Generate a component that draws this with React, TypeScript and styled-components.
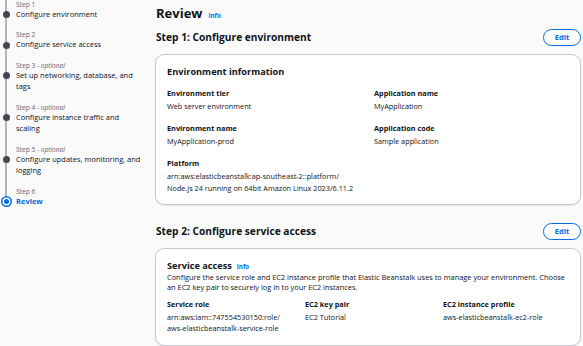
import React from "react";
import styled, { createGlobalStyle } from "styled-components";

const GlobalStyle = createGlobalStyle`
  html, body {
    margin: 0;
    padding: 0;
    background: #fafafa;
    font-family: "Open Sans", "Noto Sans", Arial, sans-serif;
    color: #0f141a;
    overflow: hidden;
  }
`;

const Layout = styled.div`
  display: grid;
  grid-template-columns: 155px 1fr;
  width: 583px;
  height: 346px;
  overflow: hidden;
`;

const Sidebar = styled.nav`
  position: relative;
  padding-right: 12px;
`;

const StepList = styled.ol`
  list-style: none;
  margin: 0;
  padding: 0;
  position: relative;

  &::before {
    content: "";
    position: absolute;
    left: 5px;
    top: 0;
    bottom: 10px;
    width: 1.5px;
    background: #b4b4bb;
  }
`;

const StepItem = styled.li`
  position: relative;
  padding: 0 0 9.6px 16px;
`;

const StepLabel = styled.div`
  font-size: 6.6px;
  line-height: 9px;
  color: #656871;

  em {
    font-style: italic;
  }
`;

const StepTitle = styled.div<{ $active?: boolean }>`
  position: relative;
  font-size: 7.5px;
  line-height: 11.7px;
  color: ${(p) => (p.$active ? "#006ce0" : "#0f141a")};
  font-weight: ${(p) => (p.$active ? 700 : 400)};

  &::before {
    content: "";
    position: absolute;
    left: ${(p) => (p.$active ? "-12.5px" : "-13.5px")};
    top: ${(p) => (p.$active ? "3.3px" : "2.3px")};
    width: ${(p) => (p.$active ? "5px" : "7px")};
    height: ${(p) => (p.$active ? "5px" : "7px")};
    border-radius: 50%;
    background: ${(p) => (p.$active ? "#006ce0" : "#424650")};
    box-shadow: ${(p) =>
      p.$active ? "0 0 0 1.5px #ffffff, 0 0 0 3px #006ce0" : "none"};
  }
`;

const Main = styled.main`
  padding: 4px 2px 0 0;
  display: flex;
  flex-direction: column;
`;

const PageTitle = styled.h1`
  margin: 0 0 3px 1px;
  font-size: 13px;
  line-height: 19px;
  font-weight: 700;
  display: flex;
  align-items: baseline;
  gap: 6px;
`;

const InfoLink = styled.span`
  font-size: 6.2px;
  font-weight: 700;
  color: #006ce0;
`;

const SectionHeader = styled.div`
  display: flex;
  align-items: center;
  justify-content: space-between;
  height: 18px;
  margin-bottom: 8px;
`;

const SectionTitle = styled.h2`
  margin: 0 0 0 1px;
  font-size: 10.2px;
  line-height: 14px;
  font-weight: 700;
`;

const EditButton = styled.button`
  width: 38px;
  height: 17px;
  padding: 0;
  border: 1.5px solid #006ce0;
  border-radius: 10px;
  background: #ffffff;
  color: #006ce0;
  font-family: inherit;
  font-size: 7.5px;
  font-weight: 700;
  cursor: pointer;
`;

const Card = styled.section`
  background: #ffffff;
  border: 1px solid #c6c6cd;
  border-radius: 9px;
  box-shadow: 0 1px 2px rgba(0, 7, 22, 0.08);
  padding: 10px 11px 10px 11px;
  margin-bottom: 17px;
`;

const CardTitle = styled.h3`
  margin: 0 0 8px;
  font-size: 9.2px;
  line-height: 14px;
  font-weight: 700;
  display: flex;
  align-items: baseline;
  gap: 5px;
`;

const Description = styled.p`
  margin: -10px 0 5px;
  font-size: 7.4px;
  line-height: 10.3px;
  color: #0f141a;
`;

const FieldGrid = styled.div<{ $cols: number }>`
  display: grid;
  grid-template-columns: repeat(${(p) => p.$cols}, 1fr);
  column-gap: 12px;
  row-gap: 9.5px;
`;

const Field = styled.div``;

const FieldLabel = styled.div`
  font-size: 7.3px;
  line-height: 12px;
  font-weight: 700;
`;

const FieldValue = styled.div`
  margin-top: 2px;
  font-size: 7.3px;
  line-height: 11.5px;
`;

const steps = [
  { label: "Step 1", optional: false, title: "Configure environment" },
  { label: "Step 2", optional: false, title: "Configure service access" },
  { label: "Step 3", optional: true, title: "Set up networking, database, and tags" },
  { label: "Step 4", optional: true, title: "Configure instance traffic and scaling" },
  { label: "Step 5", optional: true, title: "Configure updates, monitoring, and logging" },
  { label: "Step 6", optional: false, title: "Review", active: true },
];

export default function App() {
  return (
    <>
      <GlobalStyle />
      <Layout>
        <Sidebar>
          <StepList>
            {steps.map((s) => (
              <StepItem key={s.label}>
                <StepLabel>
                  {s.label}
                  {s.optional && (
                    <>
                      {" - "}
                      <em>optional</em>
                    </>
                  )}
                </StepLabel>
                <StepTitle $active={s.active}>{s.title}</StepTitle>
              </StepItem>
            ))}
          </StepList>
        </Sidebar>

        <Main>
          <PageTitle>
            Review <InfoLink>Info</InfoLink>
          </PageTitle>

          <SectionHeader>
            <SectionTitle>Step 1: Configure environment</SectionTitle>
            <EditButton>Edit</EditButton>
          </SectionHeader>
          <Card>
            <CardTitle>Environment information</CardTitle>
            <FieldGrid $cols={2}>
              <Field>
                <FieldLabel>Environment tier</FieldLabel>
                <FieldValue>Web server environment</FieldValue>
              </Field>
              <Field>
                <FieldLabel>Application name</FieldLabel>
                <FieldValue>MyApplication</FieldValue>
              </Field>
              <Field>
                <FieldLabel>Environment name</FieldLabel>
                <FieldValue>MyApplication-prod</FieldValue>
              </Field>
              <Field>
                <FieldLabel>Application code</FieldLabel>
                <FieldValue>Sample application</FieldValue>
              </Field>
              <Field>
                <FieldLabel>Platform</FieldLabel>
                <FieldValue>
                  arn:aws:elasticbeanstalk:ap-southeast-2::platform/
                  <br />
                  Node.js 24 running on 64bit Amazon Linux 2023/6.11.2
                </FieldValue>
              </Field>
            </FieldGrid>
          </Card>

          <SectionHeader>
            <SectionTitle>Step 2: Configure service access</SectionTitle>
            <EditButton>Edit</EditButton>
          </SectionHeader>
          <Card>
            <CardTitle>
              Service access <InfoLink>Info</InfoLink>
            </CardTitle>
            <Description>
              Configure the service role and EC2 instance profile that Elastic
              Beanstalk uses to manage your environment. Choose an EC2 key pair
              to securely log in to your EC2 instances.
            </Description>
            <FieldGrid $cols={3}>
              <Field>
                <FieldLabel>Service role</FieldLabel>
                <FieldValue>
                  arn:aws:iam::747554530150:role/
                  <br />
                  aws-elasticbeanstalk-service-role
                </FieldValue>
              </Field>
              <Field>
                <FieldLabel>EC2 key pair</FieldLabel>
                <FieldValue>EC2 Tutorial</FieldValue>
              </Field>
              <Field>
                <FieldLabel>EC2 instance profile</FieldLabel>
                <FieldValue>aws-elasticbeanstalk-ec2-role</FieldValue>
              </Field>
            </FieldGrid>
          </Card>
        </Main>
      </Layout>
    </>
  );
}
